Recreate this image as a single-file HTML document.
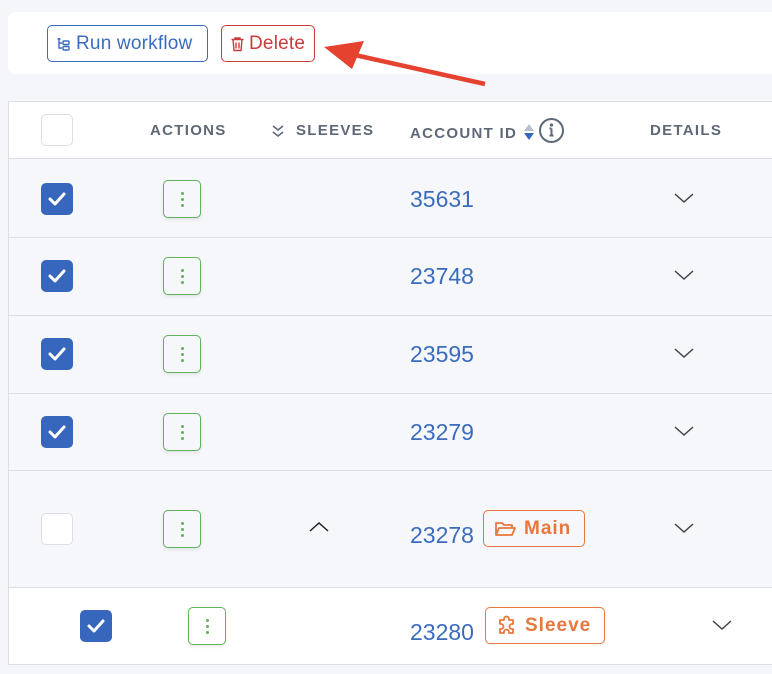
<!DOCTYPE html>
<html><head><meta charset="utf-8"><style>
*{box-sizing:border-box;margin:0;padding:0}
body{width:772px;height:674px;background:#f5f6fa;font-family:"Liberation Sans",sans-serif;position:relative;overflow:hidden}
.a{position:absolute}
svg{flex-shrink:0}
.card{left:8px;top:12px;width:780px;height:62px;background:#fff;border-radius:8px}
.btn{top:25px;height:37px;border-radius:5px;border:1px solid;font-size:19px;display:flex;align-items:center;gap:4px;padding:0 6px 0 8px;background:#fff;letter-spacing:.2px;white-space:nowrap}
.th{font-size:15px;letter-spacing:1.3px;font-weight:bold;color:#5f6877;top:122px}
.row{left:8px;width:780px;border-bottom:1px solid #dcdee3;background:#f6f7fb}
.cb{width:32px;height:32px;border-radius:5px}
.cbon{background:#3767bd;display:flex;align-items:center;justify-content:center}
.cboff{background:#fff;border:1px solid #dcdfe4}
.act{width:38px;height:38px;border:1.5px solid #5fb35a;border-radius:5px;background:#f6f7fb;box-shadow:0 2px 3px rgba(0,0,0,.08);display:flex;flex-direction:column;align-items:center;justify-content:center;gap:3px}
.act i{width:3px;height:3px;border-radius:50%;background:#5fb35a;display:block}
.id{font-size:23px;color:#3a6bbf}
.tag{height:37px;border:1.5px solid #e8773d;border-radius:5px;color:#e8773d;font-weight:bold;font-size:19px;display:flex;align-items:center;gap:7px;padding:0 10px;letter-spacing:1px}
</style></head><body>
<div class="a card"></div>
<div class="a btn" style="left:47px;width:161px;border-color:#3a6bbf;color:#3a6bbf">
<svg width="16" height="16" viewBox="0 0 16 16" fill="none" stroke="#3a6bbf" stroke-width="1.4"><path d="M3 2v10h3M3 7h3M1.5 3h3"/><rect x="7" y="5" width="6" height="3.5" rx="1"/><rect x="7" y="10.5" width="6" height="3.5" rx="1"/></svg>Run workflow</div>
<div class="a btn" style="left:221px;width:94px;border-color:#cc3b3b;color:#cc3b3b">
<svg width="15" height="16" viewBox="0 0 15 16" fill="none" stroke="#cc3b3b" stroke-width="1.4"><path d="M1.5 3.5h12M5 3.5V2h5v1.5M3 3.5l1 11h7l1-11M6 6.5v6M9 6.5v6"/></svg>Delete</div>
<svg class="a" style="left:320px;top:38px" width="170" height="52" viewBox="0 0 170 52"><path d="M165 46L35 17" stroke="#e5432f" stroke-width="4.5"/><path d="M4 9l40-6-12 28z" fill="#e5432f"/></svg>

<div class="a" style="left:8px;top:101px;width:780px;height:58px;background:#fff;border-top:1px solid #dcdee3;border-left:1px solid #dcdee3;border-bottom:1px solid #dcdee3"></div>
<div class="a cb cboff" style="left:41px;top:114px"></div>
<div class="a th" style="left:150px">ACTIONS</div>
<svg class="a" style="left:271px;top:123px" width="14" height="16" viewBox="0 0 14 16" fill="none" stroke="#5f6877" stroke-width="1.6"><path d="M2 3l5 4 5-4M2 9l5 4 5-4"/></svg>
<div class="a th" style="left:296px">SLEEVES</div>
<div class="a th" style="left:410px;top:125px">ACCOUNT ID</div>
<svg class="a" style="left:522px;top:122px" width="14" height="20" viewBox="0 0 14 20"><path d="M7 2l5 7H2z" fill="#b9c0cc"/><path d="M2 11h10l-5 7z" fill="#3767bd"/></svg>
<svg class="a" style="left:538px;top:117px" width="27" height="27" viewBox="0 0 27 27" fill="none" stroke="#5f6877" stroke-width="2"><circle cx="13.5" cy="13.5" r="11.5"/><path d="M13.5 11.5v7M11.5 11.5h2M11.5 18.5h4"/><circle cx="13.5" cy="8" r=".6" fill="#5f6877"/></svg>
<div class="a th" style="left:650px">DETAILS</div>

<div class="a row" style="top:159px;height:79px;border-left:1px solid #dcdee3"></div>
<div class="a row" style="top:238px;height:78px;border-left:1px solid #dcdee3"></div>
<div class="a row" style="top:316px;height:78px;border-left:1px solid #dcdee3"></div>
<div class="a row" style="top:394px;height:77px;border-left:1px solid #dcdee3"></div>
<div class="a row" style="top:471px;height:117px;border-left:1px solid #dcdee3"></div>
<div class="a row" style="top:588px;height:77px;background:#fff;border-left:1px solid #dcdee3"></div>

<div class="a cb cbon" style="left:41px;top:183px"><svg width="20" height="16" viewBox="0 0 20 16"><path d="M3 8l5 5 9-10" fill="none" stroke="#fff" stroke-width="3" stroke-linecap="round" stroke-linejoin="round"/></svg></div>
<div class="a cb cbon" style="left:41px;top:260px"><svg width="20" height="16" viewBox="0 0 20 16"><path d="M3 8l5 5 9-10" fill="none" stroke="#fff" stroke-width="3" stroke-linecap="round" stroke-linejoin="round"/></svg></div>
<div class="a cb cbon" style="left:41px;top:338px"><svg width="20" height="16" viewBox="0 0 20 16"><path d="M3 8l5 5 9-10" fill="none" stroke="#fff" stroke-width="3" stroke-linecap="round" stroke-linejoin="round"/></svg></div>
<div class="a cb cbon" style="left:41px;top:416px"><svg width="20" height="16" viewBox="0 0 20 16"><path d="M3 8l5 5 9-10" fill="none" stroke="#fff" stroke-width="3" stroke-linecap="round" stroke-linejoin="round"/></svg></div>
<div class="a cb cboff" style="left:41px;top:513px"></div>
<div class="a cb cbon" style="left:80px;top:610px"><svg width="20" height="16" viewBox="0 0 20 16"><path d="M3 8l5 5 9-10" fill="none" stroke="#fff" stroke-width="3" stroke-linecap="round" stroke-linejoin="round"/></svg></div>

<div class="a act" style="left:163px;top:180px"><i></i><i></i><i></i></div>
<div class="a act" style="left:163px;top:257px"><i></i><i></i><i></i></div>
<div class="a act" style="left:163px;top:335px"><i></i><i></i><i></i></div>
<div class="a act" style="left:163px;top:413px"><i></i><i></i><i></i></div>
<div class="a act" style="left:163px;top:510px"><i></i><i></i><i></i></div>
<div class="a act" style="left:188px;top:607px;background:#fff"><i></i><i></i><i></i></div>

<div class="a id" style="left:410px;top:186px">35631</div>
<div class="a id" style="left:410px;top:263px">23748</div>
<div class="a id" style="left:410px;top:341px">23595</div>
<div class="a id" style="left:410px;top:419px">23279</div>
<div class="a id" style="left:410px;top:522px">23278</div>
<div class="a id" style="left:410px;top:619px">23280</div>

<div class="a tag" style="left:483px;top:510px;width:102px"><svg width="23" height="18" viewBox="0 0 23 18" fill="none" stroke="#e8773d" stroke-width="1.8" stroke-linejoin="round"><path d="M2 15V3h6l2 2h8v3M2 15l3-7h16l-3 7z"/></svg>Main</div>
<div class="a tag" style="left:485px;top:607px;width:120px"><svg width="22" height="22" viewBox="0 0 22 22" fill="none" stroke="#e8773d" stroke-width="1.8" stroke-linejoin="round"><path d="M8 4a2.5 2.5 0 015 0v1h4v4h-1a2.5 2.5 0 000 5h1v4h-4v-1a2.5 2.5 0 00-5 0v1H4v-4h1a2.5 2.5 0 000-5H4V5h4z"/></svg>Sleeve</div>

<svg class="a" style="left:673px;top:191px" width="22" height="14" viewBox="0 0 22 14"><path d="M2 3l9 8 9-8" fill="none" stroke="#444" stroke-width="1.5"/></svg>
<svg class="a" style="left:673px;top:268px" width="22" height="14" viewBox="0 0 22 14"><path d="M2 3l9 8 9-8" fill="none" stroke="#444" stroke-width="1.5"/></svg>
<svg class="a" style="left:673px;top:346px" width="22" height="14" viewBox="0 0 22 14"><path d="M2 3l9 8 9-8" fill="none" stroke="#444" stroke-width="1.5"/></svg>
<svg class="a" style="left:673px;top:424px" width="22" height="14" viewBox="0 0 22 14"><path d="M2 3l9 8 9-8" fill="none" stroke="#444" stroke-width="1.5"/></svg>
<svg class="a" style="left:673px;top:521px" width="22" height="14" viewBox="0 0 22 14"><path d="M2 3l9 8 9-8" fill="none" stroke="#444" stroke-width="1.5"/></svg>
<svg class="a" style="left:711px;top:618px" width="22" height="14" viewBox="0 0 22 14"><path d="M2 3l9 8 9-8" fill="none" stroke="#444" stroke-width="1.5"/></svg>
<svg class="a" style="left:308px;top:520px" width="22" height="14" viewBox="0 0 22 14"><path d="M2 11l9-8 9 8" fill="none" stroke="#222" stroke-width="1.5"/></svg>
</body></html>
